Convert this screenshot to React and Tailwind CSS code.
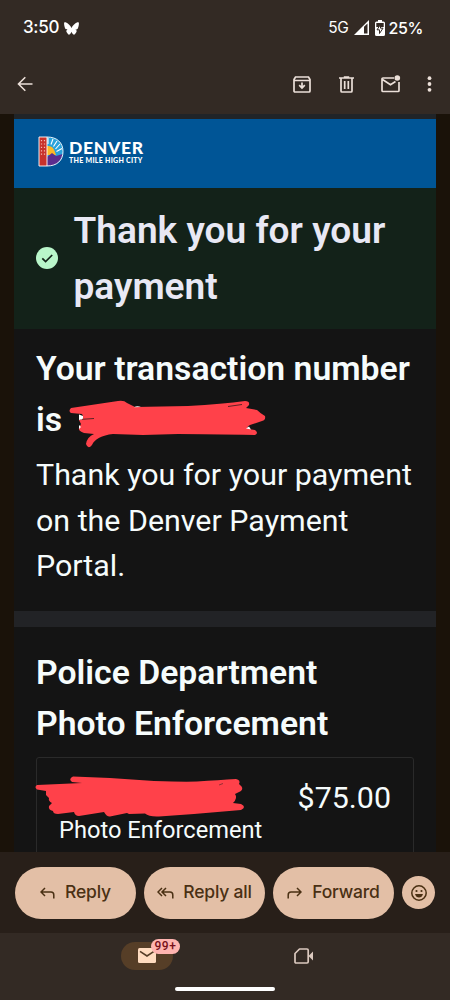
const ink = "#ece0d9";

function StatusBar() {
  return (
    <div className="flex h-[56px] items-center justify-between pl-[23px] pr-[27px] text-white">
      <div className="flex items-center gap-[5px]">
        <span className="text-[17px] font-medium tracking-[-0.3px]">3:50</span>
        <svg className="h-[13px] w-[15px]" viewBox="0 0 24 21" fill="#fff">
          <path d="M12 9.500C10.500 6.500 6.700 1.500 2.500.4.6 0 0 .8 0 2.500c0 1.800 1 7 1.800 8.200 1 1.500 2.500 2 4.400 1.900-3 .5-3.200 2.200-1.700 4.500C6 19.500 7.200 21 8.800 20.300c1.600-.8 2.600-3 3.200-4.500.6 1.500 1.600 3.700 3.200 4.500 1.600.7 2.800-.8 4.300-3.200 1.500-2.300 1.300-4-1.700-4.500 1.900.1 3.400-.4 4.400-1.900C23 9.500 24 4.300 24 2.500c0-1.700-.6-2.500-2.500-2.100C17.300 1.500 13.500 6.500 12 9.500z" />
        </svg>
      </div>
      <div className="flex items-center">
        <span className="text-[15.500px] tracking-[-0.3px]">5G</span>
        <svg className="mb-[1px] ml-[5px] h-[15px] w-[15px]" viewBox="0 0 15 15">
          <path d="M0 15L15 0V15z" fill="#fff" />
          <path d="M10 6.800L13.500 3.400V13.500H10z" fill="#332a24" />
        </svg>
        <svg className="mr-[4px] mb-[1px] ml-[6px] h-[16px] w-[10px]" viewBox="0 0 10 16">
          <path d="M3 0H7V1.500H8.500Q10 1.500 10 3V14.500Q10 16 8.500 16H1.500Q0 16 0 14.500V3Q0 1.500 1.500 1.500H3z" fill="#fff" />
          <path d="M1.300 3H8.700V7H1.300z" fill="#332a24" />
          <path d="M5.500 4.500L2 9.800H4.500V13.500L8 8.200H5.500z" fill="#fff" stroke="#332a24" strokeWidth="1" />
        </svg>
        <span className="text-[16px] font-medium tracking-[-0.4px]">25%</span>
      </div>
    </div>
  );
}

function Toolbar() {
  return (
    <div className="flex h-[58px] items-center pb-[2px] pl-[17px] pr-[18px]">
      <svg className="h-[16px] w-[16px]" viewBox="0 0 16 16" fill="none" stroke={ink} strokeWidth="1.600">
        <path d="M15.500 8H1.500M8.300 1.200L1.500 8L8.300 14.800" />
      </svg>
      <div className="ml-auto flex items-center">
        <svg className="h-[17px] w-[18px]" viewBox="0 0 18 17" fill="none" stroke={ink} strokeWidth="1.700">
          <path d="M1 3.500L2.500 1H15.500L17 3.500V15Q17 16 16 16H2Q1 16 1 15zM1 4.500H17" />
          <path d="M9 6.500V12M6.200 9.200L9 12L11.800 9.200" />
        </svg>
        <svg className="ml-[28px] h-[17px] w-[15px]" viewBox="0 0 15 17" fill="none" stroke={ink} strokeWidth="1.700">
          <path d="M0 2H15M4.800 1H10.200M2 2.500V15Q2 16 3 16H12Q13 16 13 15V2.500M5.700 5V13M9.300 5V13" />
        </svg>
        <svg className="ml-[27px] h-[18px] w-[20px]" viewBox="0 0 20 18" fill="none" stroke={ink} strokeWidth="1.700">
          <path d="M13 3H2Q1 3 1 4V15.500Q1 16.500 2 16.500H17Q18 16.500 18 15.500V7M1.500 4.500L9.500 9.700L14.500 6.500" />
          <circle cx="16.300" cy="3" r="2.800" fill={ink} stroke="none" />
        </svg>
        <svg className="ml-[26px] h-[16px] w-[5px]" viewBox="0 0 5 16" fill={ink}>
          <circle cx="2.500" cy="2.200" r="1.900" />
          <circle cx="2.500" cy="8" r="1.900" />
          <circle cx="2.500" cy="13.800" r="1.900" />
        </svg>
      </div>
    </div>
  );
}

function DenverLogo() {
  return (
    <div className="flex items-center">
      <svg className="h-[31px] w-[26px]" viewBox="0 0 26 31">
        <path d="M1 1H9C19 1 25 6.500 25 15.500S19 30 9 30H1z" fill="#29a3dc" />
        <path d="M9 10Q15 9 17 16L18 19H9z" fill="#fdb927" />
        <path d="M10 8V2M13 8.500L15 3M15.500 10.500L19 5M17.500 13L22 8M18.500 15.500L24 12.500" stroke="#fff" strokeWidth="1.100" />
        <path d="M9 21L14 17L18 20L24.500 18Q22 30 9 30z" fill="#5b2d8e" />
        <path d="M1 1H9V30H1z" fill="#c8322b" />
        <path d="M3.500 4V19M6.500 4V19" stroke="#f3b9b3" strokeWidth="1.200" strokeDasharray="1.200 2.200" />
        <path d="M1 1H9C19 1 25 6.500 25 15.500S19 30 9 30H1zM9 1V30" fill="none" stroke="#fff" strokeWidth=".9" />
      </svg>
      <div className="ml-[5px] flex flex-col font-['Lato',sans-serif] whitespace-nowrap text-white">
        <span className="text-[17.500px] leading-[17px] font-black tracking-[0.700px]">DENVER</span>
        <span className="text-[7px] leading-[8px] font-black tracking-[0.280px]">THE MILE HIGH CITY</span>
      </div>
    </div>
  );
}

function TransactionScribble() {
  return (
    <svg className="absolute top-[6px] left-[32px] h-[48px] w-[200px]" viewBox="0 0 200 48">
      <path
        d="M3 8L50 1Q56 0 59 3L67 7L120 6Q155 4 177 1Q182 1 181 5L178 8L189 10Q192 13 197 16Q198 20 194 21L182 25Q175 29 187 30Q191 33 187 35Q140 34 110 34L75 35L45 34Q28 36 24 45Q20 50 18 44Q19 37 26 34L16 33Q10 31 11 28L13 24L11 20Q17 19 14 14L3 13Q0 11 3 8z"
        fill="#ff414a"
      />
      <g fill="#fff">
        <path d="M11 14.500L15 16V19L11 20zM11 25L13 27L11 29zM66 7.200Q69 5.500 73 7zM178 28.500L181 26.500L183 29.500z" />
      </g>
      <path d="M14 19.300L26 18.500M160 6.500L174 4.500" stroke="#141414" strokeWidth=".7" />
    </svg>
  );
}

function CitationScribble() {
  return (
    <svg className="absolute top-[17px] left-[-3px] h-[44px] w-[214px]" viewBox="0 0 214 44">
      <path
        d="M39 1.500L76 3L120 6Q150 7 163 6.500Q185 5 202 4Q207 5 205 9L206 10Q210 13 207 16L201 19Q204 23 199 28L207 29Q213 32 207 35L160 39L125 41.500Q115 42 111 38.500L95 39L93 38L76 41.500Q73 42 70 37L45 41Q41 41 40 37L24 39Q19 39 19 36Q14 35 15 31L18 28Q14 26 15 23L12 20V16L3 14.500Q0 12 3 10L48 8L38 7Q34 4 39 1.500z"
        fill="#ff414a"
      />
      <path d="M185 10L189 8.500" stroke="#7a2a2e" strokeWidth=".8" />
    </svg>
  );
}

function EmailBody() {
  return (
    <main className="flex h-[738px] flex-col overflow-hidden bg-[#1a1209] px-[14px] font-['Roboto',sans-serif] text-[#f6fcfc]">
      <div className="h-[5px] shrink-0 bg-[#202428]" />
      <div className="flex h-[69px] shrink-0 items-center bg-[#005596] pb-[5px] pl-[24px]">
        <DenverLogo />
      </div>
      <section className="flex h-[141px] shrink-0 items-center bg-[#132219] pl-[22px]">
        <svg className="mb-[1px] h-[22px] w-[22px] shrink-0" viewBox="0 0 22 22">
          <circle cx="11" cy="11" r="11" fill="#b9f6ca" />
          <path d="M6.300 11.300L9.600 14.600L16.200 8" fill="none" stroke="#132219" strokeWidth="1.700" />
        </svg>
        <h1 className="ml-[15.500px] text-[37.100px] leading-[56px] font-semibold whitespace-nowrap text-[#e8e8f4]">
          Thank you for your
          <br />
          payment
        </h1>
      </section>
      <section className="h-[282px] shrink-0 bg-[#141414] pt-[14px] pl-[22px] whitespace-nowrap">
        <h2 className="text-[33.750px] leading-[51px] font-semibold">Your transaction number</h2>
        <div className="relative h-[51px] text-[33.750px] leading-[51px] font-semibold">
          is
          <TransactionScribble />
        </div>
        <p className="mt-[7px] text-[30.400px] leading-[45.600px]">
          Thank you for your payment
          <br />
          on the Denver Payment
          <br />
          Portal.
        </p>
      </section>
      <div className="h-[16px] shrink-0 bg-[#222326]" />
      <section className="h-[260px] shrink-0 bg-[#141414] pt-[21px] pr-[22px] pl-[22px] whitespace-nowrap">
        <h2 className="text-[33.750px] leading-[50.600px] font-semibold">
          Police Department
          <br />
          Photo Enforcement
        </h2>
        <div className="relative mt-[7.800px] h-[140px] rounded-[3px] border border-[#2a2a2a] pt-[18px] pr-[22px] pl-[22px]">
          <CitationScribble />
          <div className="text-right text-[30.400px] leading-[44px]">$75.00</div>
          <div className="text-[23.650px] leading-[20px]">Photo Enforcement</div>
        </div>
      </section>
    </main>
  );
}

function ReplyBar() {
  const pill =
    "flex h-[52px] w-[121px] shrink-0 items-center justify-center rounded-full bg-[#e3bfa6] text-[17.500px] font-medium tracking-[-0.2px] whitespace-nowrap text-[#4a3013]";
  return (
    <div className="flex h-[81px] items-center gap-[8px] bg-[#281f19] pl-[15px]">
      <button className={pill}>
        <svg className="mr-[10px] h-[12px] w-[15px]" viewBox="0 0 15 12" fill="none" stroke="currentColor" strokeWidth="1.500">
          <path d="M5 1L1 5L5 9M1 5H11Q13.800 5 13.800 8V11.500" />
        </svg>
        Reply
      </button>
      <button className={pill}>
        <svg className="mr-[9px] h-[12px] w-[17px]" viewBox="0 0 17 12" fill="none" stroke="currentColor" strokeWidth="1.500">
          <path d="M5 1L1 5L5 9M9 1L5 5L9 9M5 5H13Q15.800 5 15.800 8V11.500" />
        </svg>
        Reply all
      </button>
      <button className={pill}>
        <svg className="mr-[10px] h-[12px] w-[15px]" viewBox="0 0 15 12" fill="none" stroke="currentColor" strokeWidth="1.500">
          <path d="M10 1L14 5L10 9M14 5H4Q1.200 5 1.200 8V11.500" />
        </svg>
        Forward
      </button>
      <button className="flex h-[33px] w-[33px] shrink-0 items-center justify-center rounded-full bg-[#e3bfa6] text-[#4a3013]">
        <svg className="h-[16px] w-[16px]" viewBox="0 0 16 16" fill="none" stroke="currentColor" strokeWidth="1.500">
          <circle cx="8" cy="8" r="7.200" />
          <circle cx="5.500" cy="6" r="1.100" fill="currentColor" stroke="none" />
          <circle cx="10.500" cy="6" r="1.100" fill="currentColor" stroke="none" />
          <path d="M4 9H12Q11 12.500 8 12.500T4 9z" fill="currentColor" stroke="none" />
        </svg>
      </button>
    </div>
  );
}

function BottomNav() {
  return (
    <nav className="flex h-[67px] flex-col bg-[#332a24]">
      <div className="flex h-[45px] items-center pl-[121px]">
        <div className="relative flex h-[28px] w-[52px] items-center justify-center rounded-full bg-[#563e27]">
          <svg className="h-[15px] w-[18px]" viewBox="0 0 18 15">
            <rect width="18" height="15" rx="1.500" fill="#ffdcc0" />
            <path d="M2 3.300L9 8L16 3.300" fill="none" stroke="#563e27" strokeWidth="1.600" />
          </svg>
          <span className="absolute top-[-3px] left-[30px] flex h-[15px] w-[29px] items-center justify-center rounded-full bg-[#ffb4b0] font-['Roboto',sans-serif] text-[12px] font-medium tracking-[0.6px] text-[#77101a]">
            99+
          </span>
        </div>
        <svg className="ml-[121px] h-[16px] w-[19px]" viewBox="0 0 19 16">
          <path d="M5.500 1H13Q14.200 1 14.200 2.200V13.800Q14.200 15 13 15H2Q1 15 1 14V5.500z" fill="none" stroke="#dbc9bf" strokeWidth="1.700" strokeLinejoin="round" />
          <path d="M14.500 8L19 3.500V12.500z" fill="#dbc9bf" />
        </svg>
      </div>
      <div className="mt-[9px] ml-[175px] h-[4px] w-[100px] rounded-full bg-white" />
    </nav>
  );
}

export default function App() {
  return (
    <div className="h-[1000px] w-[450px] overflow-hidden bg-[#332a24] font-['Inter',sans-serif]">
      <StatusBar />
      <Toolbar />
      <EmailBody />
      <ReplyBar />
      <BottomNav />
    </div>
  );
}
